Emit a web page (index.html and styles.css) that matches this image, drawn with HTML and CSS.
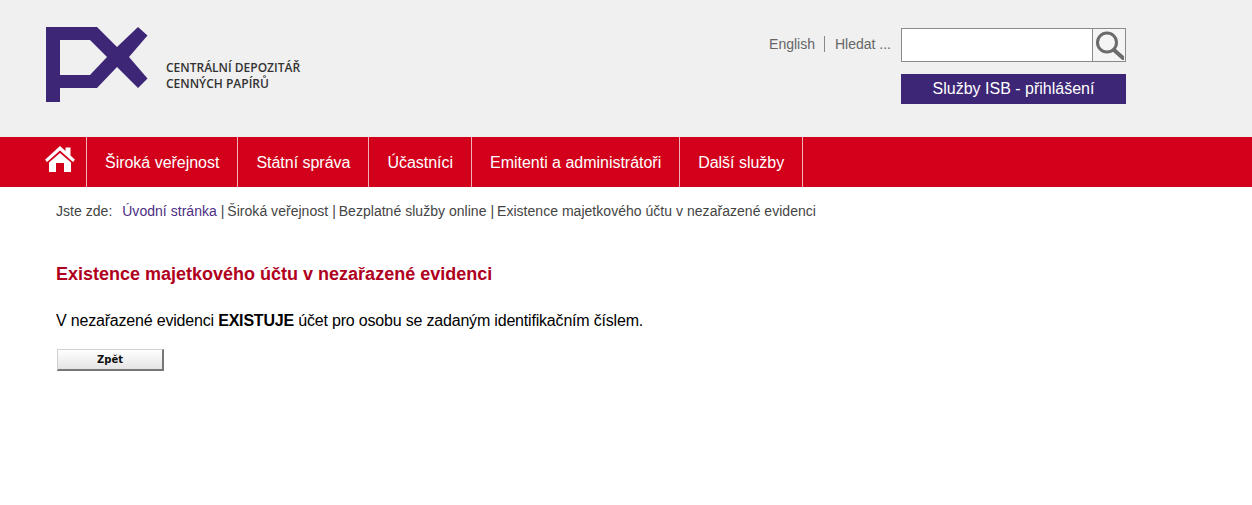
FILE: index.html
```html
<!DOCTYPE html>
<html lang="cs">
<head>
  <meta charset="utf-8">
  <title>Existence majetkového účtu v nezařazené evidenci</title>
  <link rel="stylesheet" href="styles.css">
</head>
<body>
  <div class="header">
    <a class="logo" href="#">
      <svg class="logo-mark" width="102" height="76" viewBox="46 27 102 76">
        <path fill="#3e2676" fill-rule="evenodd" d="M46 27H97L117 47L138 27L147.500 35.500L129 57L147.500 78.500L138 88L117 67L97 88H60V102H46ZM60 40V75H90L107 57L90 40Z"/>
      </svg>
      <div class="logo-text">CENTRÁLNÍ DEPOZITÁŘ<br>CENNÝCH PAPÍRŮ</div>
    </a>
    <div class="header-right">
      <div class="search-row">
        <a class="lang" href="#">English</a>
        <span class="search-label">Hledat ...</span>
        <div class="search-box">
          <input class="search-input" type="text">
          <button class="search-btn" type="button">
            <svg width="30" height="30" viewBox="0 0 30 30">
              <circle cx="13" cy="12.500" r="9.500" fill="none" stroke="#6b6b6b" stroke-width="3"/>
              <path d="M20 20L29 28" stroke="#6b6b6b" stroke-width="4" stroke-linecap="round"/>
            </svg>
          </button>
        </div>
      </div>
      <a class="isb" href="#">Služby ISB - přihlášení</a>
    </div>
  </div>

  <div class="nav">
    <a class="nav-item nav-home" href="#">
      <svg width="30" height="26" viewBox="0 0 30 26">
        <path fill="#fff" d="M15 0L20.500 5V1.500H25.500V9.500L30 13.700L28 16L15 4.600L2 16L0 13.700Z"/>
        <path fill="#fff" d="M15 7L26 16.500V26H19V17H11V26H4V16.500Z"/>
      </svg>
    </a>
    <a class="nav-item" href="#">Široká veřejnost</a>
    <a class="nav-item" href="#">Státní správa</a>
    <a class="nav-item" href="#">Účastníci</a>
    <a class="nav-item" href="#">Emitenti a administrátoři</a>
    <a class="nav-item" href="#">Další služby</a>
  </div>

  <div class="content">
    <div class="crumbs">
      <span class="crumbs-label">Jste zde:</span>
      <a href="#">Úvodní stránka</a> <span class="sep">|</span> Široká veřejnost <span class="sep">|</span> Bezplatné služby online <span class="sep">|</span> Existence majetkového účtu v nezařazené evidenci
    </div>
    <h1>Existence majetkového účtu v nezařazené evidenci</h1>
    <p>V nezařazené evidenci <b>EXISTUJE</b> účet pro osobu se zadaným identifikačním číslem.</p>
    <button class="back" type="button">Zpět</button>
  </div>
</body>
</html>
```

FILE: styles.css
```css
body {
  margin: 0;
  min-height: 505px;
  background-color: #ffffff;
  font-family: "Liberation Sans", Arial, sans-serif;
}

a {
  text-decoration: none;
}

.header {
  display: flex;
  justify-content: space-between;
  height: 137px;
  padding: 0 126px 0 46px;
  box-sizing: border-box;
  background-color: #f0f0f0;
}

.logo {
  display: flex;
  align-items: flex-start;
  padding-top: 27px;
}

.logo-text {
  margin: 33px 0 0 18px;
  font-family: "Open Sans", sans-serif;
  font-size: 12px;
  font-weight: 600;
  line-height: 16px;
  color: #333333;
}

.header-right {
  display: flex;
  flex-direction: column;
  align-items: flex-end;
  padding-top: 28px;
}

.search-row {
  display: flex;
  align-items: center;
  font-size: 14px;
  color: #666666;
}

.lang {
  margin-bottom: 2px;
  padding-right: 9px;
  border-right: 1px solid #888888;
  line-height: 16px;
  color: #666666;
}

.search-label {
  margin: 0 10px 2px;
}

.search-box {
  display: flex;
  width: 225px;
  height: 34px;
  box-sizing: border-box;
  border: 1px solid #8a8a8a;
  background-color: #ffffff;
}

.search-input {
  flex: 1;
  min-width: 0;
  padding: 0 5px;
  border: none;
  border-right: 1px solid #8a8a8a;
  background: none;
}

.search-btn {
  width: 32px;
  padding: 0 0 0 1px;
  border: none;
  background-color: #f5f5f5;
}

.search-btn svg {
  display: block;
}

.isb {
  width: 225px;
  height: 30px;
  margin-top: 12px;
  background-color: #3e2676;
  color: #ffffff;
  font-size: 16px;
  line-height: 30px;
  text-align: center;
}

.nav {
  display: flex;
  height: 50px;
  padding-left: 45px;
  background-color: #d2001a;
}

.nav-item {
  padding: 0 18px;
  border-right: 1px solid #eeb3ba;
  color: #ffffff;
  font-size: 16px;
  letter-spacing: -0.02px;
  line-height: 51px;
}

.nav-home {
  display: flex;
  align-items: flex-start;
  width: 42px;
  padding: 9px 0 0 0;
  box-sizing: border-box;
}

.content {
  padding: 16px 56px 0;
}

.crumbs {
  font-size: 14px;
  letter-spacing: 0.03px;
  line-height: 16px;
  color: #444444;
}

.crumbs-label {
  margin-right: 6px;
}

.crumbs a {
  color: #4b2e83;
}

.sep {
  margin-right: -1px;
}

h1 {
  margin: 44px 0 0;
  font-size: 18px;
  line-height: 22px;
  color: #b00020;
}

p {
  margin: 26px 0 0;
  font-size: 16px;
  letter-spacing: -0.19px;
  line-height: 20px;
  color: #000000;
}

.back {
  display: block;
  width: 107px;
  height: 22px;
  margin: 18px 0 0 1px;
  padding: 0;
  border: 1px solid #d0d0d0;
  border-right: 2px solid #777777;
  border-bottom: 2px solid #777777;
  background: linear-gradient(#ffffff, #e4e4e4);
  font-family: "DejaVu Sans", Verdana, sans-serif;
  font-size: 10px;
  font-weight: bold;
  color: #111111;
}
```
